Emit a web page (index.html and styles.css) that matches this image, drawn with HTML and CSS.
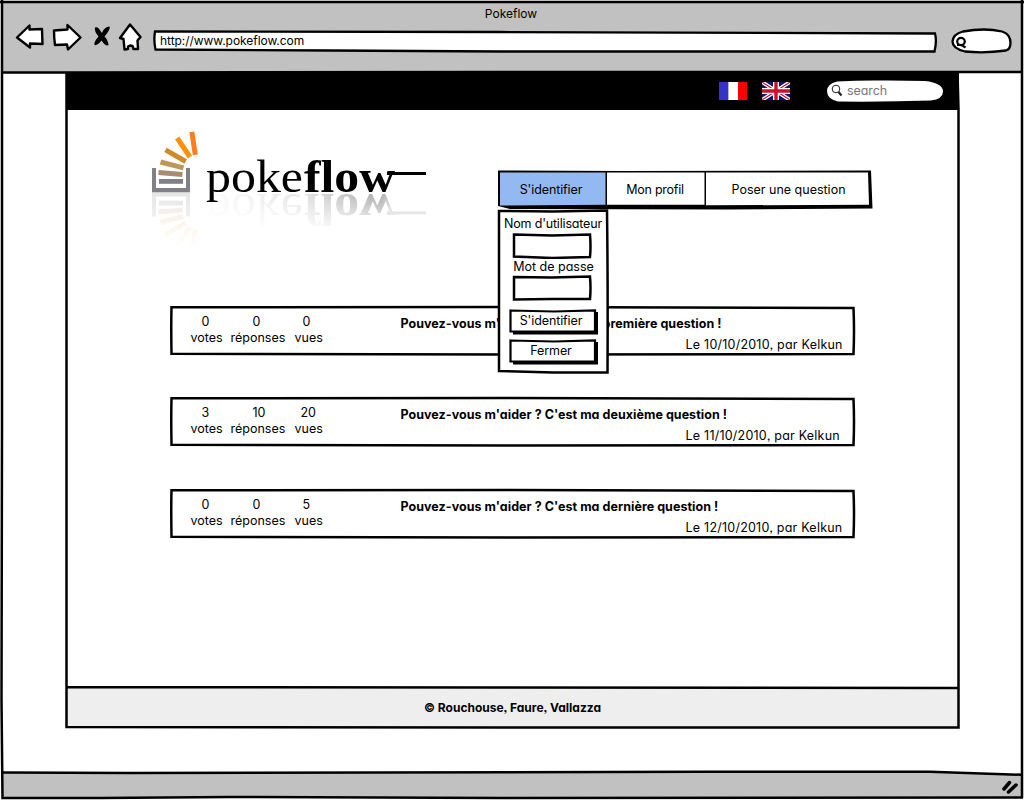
FILE: index.html
```html
<!DOCTYPE html>
<html lang="fr">
<head>
<meta charset="utf-8">
<title>Pokeflow</title>
<link rel="stylesheet" href="styles.css">
</head>
<body>
<div class="window">
  <header class="chrome">
    <svg class="sketch" width="1024" height="74" viewBox="0 0 1024 74">
      <path d="M2 3H1022V72H2Z" fill="#c1c1c1"/>
      <g fill="#fff" stroke="#000" stroke-width="2.4" stroke-linejoin="round">
        <path d="M17 37.500L29.500 25.500V29.500L42 29L42.500 44L30 43.500V47.500Z"/>
        <path d="M54 30.500L67.500 29.500V25L80.500 37.500L68 49.500L67 44.500L55 45Q54 38 54 30.500Z"/>
        <path d="M130 24.500L140.500 37L137.500 40.500L138 49H133.500L132.500 46L130 45.500L128 46.500V49L124.500 49.500L123.500 39L120 38Z"/>
      </g>
      <path d="M95 27.500Q98 26 100.500 31L102 33Q104 27 109.500 26.500Q111 29 104.500 36.500Q108 40 108.500 45Q106 47 101.500 40.500Q97 46 94.500 45Q93.500 42 98.500 36.500Q94 31 95 27.500Z"/>
      <path d="M155 31.500L500 32L935 33.500Q937 41 934.500 51.500L500 51.500L330 50.500L155.500 49.500Q153.500 40 155 31.500Z" fill="#fff" stroke="#000" stroke-width="2.300"/>
      <path d="M963 31.500Q985 27.500 1002 31.500Q1010.500 34 1010.500 43Q1010.500 49 1006 50.500Q985 53.500 965 51.500Q952.500 48.500 952.500 41.500Q953 34 963 31.500Z" fill="#fff" stroke="#000" stroke-width="2.300"/>
      <g fill="none" stroke="#000" stroke-width="2.200"><ellipse cx="961" cy="41.500" rx="3.800" ry="3.600"/><path d="M957 45H961.500L965.500 47.500"/></g>
    </svg>
    <div class="window-title">Pokeflow</div>
    <div class="url">http://www.pokeflow.com</div>
  </header>

  <div class="page">
    <div class="topbar">
      <svg class="flag" viewBox="0 0 28 18"><path fill="#33c" d="M0 0h9.300v18H0z"/><path fill="#fff" d="M9.300 0H19v18H9.300z"/><path fill="#f00" d="M19 0h9v18h-9z"/></svg>
      <svg class="flag" viewBox="0 0 28 18"><path fill="#00186e" d="M0 0h28v18H0z"/><path d="M0 0L28 18M28 0L0 18" stroke="#fff" stroke-width="3.800"/><path d="M0 0L28 18M28 0L0 18" stroke="#c8102e" stroke-width="1.100"/><path d="M14 0V18M0 9H28" stroke="#fff" stroke-width="6"/><path d="M14 0V18M0 9H28" stroke="#cc0f2b" stroke-width="3.400"/></svg>
      <div class="search">
        <svg class="sketch" width="116" height="22" viewBox="0 0 116 22"><path d="M10 1.500Q35 0 60 .5L98 1Q116 3 116 11.500Q116 19 104 20.500Q60 22 11 21.500Q0 19 0 11Q0 4 10 1.500Z" fill="#fff"/><g fill="none" stroke="#222"><circle cx="9" cy="9" r="3.800"/><path d="M11.500 12L14.500 15.500" stroke-width="2.200"/></g></svg>
        <span>search</span>
      </div>
    </div>

    <main class="content">
      <div class="masthead">
        <svg class="logo" width="300" height="130" viewBox="140 120 300 130">
          <defs>
            <linearGradient id="fadeText" x1="206" x2="390" y1="0" y2="0" gradientUnits="userSpaceOnUse"><stop offset="0" stop-color="#fff" stop-opacity=".01"/><stop offset=".5" stop-color="#fff" stop-opacity=".1"/><stop offset=".95" stop-color="#fff" stop-opacity=".34"/><stop offset="1" stop-color="#fff" stop-opacity=".2"/></linearGradient>
            <linearGradient id="fadeWhite" x1="0" x2="0" y1="193" y2="232" gradientUnits="userSpaceOnUse"><stop offset="0" stop-color="#fff" stop-opacity="0"/><stop offset="1" stop-color="#fff"/></linearGradient>
            <linearGradient id="fadeIcon" x1="0" x2="0" y1="193" y2="247" gradientUnits="userSpaceOnUse"><stop offset="0" stop-color="#fff" stop-opacity="0"/><stop offset="1" stop-color="#fff"/></linearGradient>
            <mask id="maskText" maskUnits="userSpaceOnUse" x="200" y="193" width="235" height="60"><path fill="url(#fadeText)" d="M200 193h235v60H200z"/></mask>
            <g id="stack">
              <path d="M152 168h4v20h30v-20h4v24.300h-38z" fill="#818086"/>
              <path d="M159 179h24v4.800h-24z" fill="#818086"/>
              <g fill="none" stroke-width="5"><path d="M158.500 172.500L182.500 174.500" stroke="#a98c70"/><path d="M160.500 162L183.500 167.800" stroke="#c0975a"/><path d="M165.500 149.800L185.800 161.500" stroke="#d08b28"/><path d="M177.200 138L190 157" stroke="#ff8e0a"/><path d="M191.800 131.800L195.300 154.800" stroke="#ff7d1d"/></g>
            </g>
            <g id="wordmark">
              <text x="206" y="192.300" class="logo-thin" textLength="97" lengthAdjust="spacingAndGlyphs">poke</text>
              <text x="304" y="192.300" class="logo-bold" textLength="91" lengthAdjust="spacingAndGlyphs">flow</text>
              <path d="M387 172h39v3h-39z"/>
            </g>
          </defs>
          <g opacity=".2"><use href="#stack" transform="matrix(1 0 0 -1 0 384.500)"/></g>
          <path d="M145 193h57v57h-57z" fill="url(#fadeIcon)"/>
          <g mask="url(#maskText)"><use href="#wordmark" transform="matrix(1 0 0 -1 0 386.500)"/></g>
          <path d="M206 193h230v55h-230z" fill="url(#fadeWhite)"/>
          <use href="#stack"/><use href="#wordmark"/>
        </svg>
        <nav class="nav">
          <svg class="sketch" width="376" height="40" viewBox="0 0 376 40">
            <path d="M0 .500L125 1L373 .500L374.500 38.500L230 39.500L12 39L0 36Z"/>
            <path d="M2 2.500H107.500V34.800L2 35.500Z" fill="#93b9f2"/>
            <path d="M109 2.500H206.500V34.800H109ZM208 2.500H370L371 34.800L208 35.300Z" fill="#fff"/>
          </svg>
          <a class="tab t1">S'identifier</a><a class="tab t2">Mon profil</a><a class="tab t3">Poser une question</a>
          <form class="login">
            <svg class="sketch" width="111" height="166" viewBox="0 0 111 166"><path d="M1 2L55 2.500L109 1.500Q110 80 109.500 163.500L55 163.500L1 162Z" fill="#fff" stroke="#000" stroke-width="2.500"/></svg>
            <label class="user">Nom d'utilisateur</label>
            <div class="field"><svg width="80" height="26" viewBox="0 0 80 26"><path d="M2 1.500L40 2.500L78 1.500Q79 13 78 24L40 25L2 23.500Z" fill="#fff" stroke="#000" stroke-width="2.500"/></svg></div>
            <label>Mot de passe</label>
            <div class="field second"><svg width="80" height="26" viewBox="0 0 80 26"><path d="M2 2L40 2.500L78 1.500Q79 13 78 24L40 24L2 24.500Z" fill="#fff" stroke="#000" stroke-width="2.500"/></svg></div>
            <div class="button"><svg class="sketch" width="90" height="27" viewBox="0 0 90 27"><path d="M4 22L86 23V3H89V25.500L4 25.500Z"/><path d="M1.500 1.500L45 2.500L86 1.500V22.500L1.500 22.500Z" fill="#fff" stroke="#000" stroke-width="2.200"/></svg><span>S'identifier</span></div>
            <div class="button"><svg class="sketch" width="90" height="27" viewBox="0 0 90 27"><path d="M4 22L86 23V3H89V25.500L4 25.500Z"/><path d="M1.500 1.500L45 2.500L86 1.500V22.500L1.500 22.500Z" fill="#fff" stroke="#000" stroke-width="2.200"/></svg><span>Fermer</span></div>
          </form>
        </nav>
      </div>

      <section class="questions">
        <article class="card">
          <svg class="sketch" width="686" height="49" viewBox="0 0 686 49"><path d="M1.500 1.200L340 1L683.500 2Q684.500 25 683.500 48L340 48.500L1.500 47.700Q1 20 1.500 1.200Z" fill="none" stroke="#000" stroke-width="2.500"/></svg>
          <div class="stat votes"><b>0</b><span>votes</span></div><div class="stat answers"><b>0</b><span>réponses</span></div><div class="stat views"><b>0</b><span>vues</span></div>
          <div class="body"><h2>Pouvez-vous m'aider ? C'est ma première question !</h2><p>Le 10/10/2010, par Kelkun</p></div>
        </article>
        <article class="card">
          <svg class="sketch" width="686" height="49" viewBox="0 0 686 49"><path d="M1.500 1.200L340 1L683.500 2Q684.500 25 683.500 48L340 48.500L1.500 47.700Q1 20 1.500 1.200Z" fill="none" stroke="#000" stroke-width="2.500"/></svg>
          <div class="stat votes"><b>3</b><span>votes</span></div><div class="stat answers"><b>10</b><span>réponses</span></div><div class="stat views two"><b>20</b><span>vues</span></div>
          <div class="body"><h2>Pouvez-vous m'aider ? C'est ma deuxième question !</h2><p>Le 11/10/2010, par Kelkun</p></div>
        </article>
        <article class="card last">
          <svg class="sketch" width="686" height="49" viewBox="0 0 686 49"><path d="M1.500 1.200L340 1L683.500 2Q684.500 25 683.500 48L340 48.500L1.500 47.700Q1 20 1.500 1.200Z" fill="none" stroke="#000" stroke-width="2.500"/></svg>
          <div class="stat votes"><b>0</b><span>votes</span></div><div class="stat answers"><b>0</b><span>réponses</span></div><div class="stat views"><b>5</b><span>vues</span></div>
          <div class="body"><h2>Pouvez-vous m'aider ? C'est ma dernière question !</h2><p>Le 12/10/2010, par Kelkun</p></div>
        </article>
      </section>
    </main>
    <footer class="credits">© Rouchouse, Faure, Vallazza</footer>
  </div>

  <svg class="outline" width="1024" height="800" viewBox="0 0 1024 800">
    <path d="M2 772.500L240 772.500L930 771.500L1022 775V798L500 797.500L230 796.500L3 798Z" fill="#c1c1c1"/>
    <g fill="none" stroke="#000" stroke-width="2.500">
      <path d="M0 2L1024 2M2 72.500L66 72.500L500 72L958 72H1022M2 0V430L1.500 700L2.500 798L100 798L230 797L500 798L1023 797.500M1022 0V798"/>
      <path d="M2 772.500L130 773L700 771.800L930 771.800L1022 774.800"/>
      <path d="M66.500 72V727L500 727.500H958.500V110L957.500 72M66 687L500 687.500L958 688"/>
    </g>
    <path d="M1004 789L1009.500 782.500M1008.500 792L1016 785" stroke="#000" stroke-width="3.500" stroke-linecap="round"/>
  </svg>
</div>
</body>
</html>
```
FILE: styles.css
```css
* { box-sizing: border-box; }
body { margin: 0; background: #fff; color: #000; font: 12.5px/16px Inter, "Open Sans", sans-serif; font-feature-settings: "cv11" 1, "ss03" 1; white-space: nowrap; }
.window { position: relative; z-index: 0; width: 1024px; height: 800px; overflow: hidden; }
.sketch { position: absolute; left: 0; top: 0; z-index: -1; display: block; overflow: visible; }
.chrome { position: relative; z-index: 0; height: 72px; padding-top: 6px; }
.window-title { text-align: center; padding-right: 2px; font-size: 12px; }
.url { margin: 11px 0 0 160px; font-size: 12px; letter-spacing: -.05px; }
.outline { position: absolute; left: 0; top: 0; z-index: 1; pointer-events: none; }
.page { width: 893px; height: 656px; margin-left: 66px; display: flex; flex-direction: column; }
.topbar { position: relative; height: 38px; background: #000; display: flex; align-items: center; justify-content: flex-end; gap: 15px; padding-right: 16px; }
.flag { width: 28px; height: 18px; display: block; }
.search { position: relative; z-index: 0; width: 116px; height: 22px; margin: 0 0 0 22px; padding: 3px 0 0 20px; color: #777583; letter-spacing: -.1px; }
.content { flex: 1; }
.masthead { display: flex; height: 196px; padding: 10px 0 0 74px; }
.logo { flex: none; }
.logo-thin, .logo-bold { font-family: "Liberation Serif", serif; font-size: 47px; }
.logo-bold { font-weight: bold; }
.nav { position: relative; z-index: 2; display: flex; width: 376px; height: 40px; margin: 50px 0 0 58px; }
.tab { height: 38px; line-height: 40px; text-align: center; }
.t1 { width: 106px; letter-spacing: -.1px; }
.t2 { width: 101px; letter-spacing: -.25px; padding-left: 1px; }
.t3 { width: 167px; }
.login { position: absolute; z-index: 3; left: 0; top: 39px; width: 111px; height: 166px; padding-top: 7px; display: flex; flex-direction: column; align-items: center; }
.login label { height: 16px; }
.login .user { letter-spacing: -.18px; padding-right: 1px; }
.field { width: 80px; height: 26px; margin: 1px 3px 0 0; }
.second { margin-top: 0; }
.field svg { display: block; }
.button { position: relative; z-index: 0; width: 90px; height: 27px; margin: 8px 0 0; padding: 4px 5px 0 0; text-align: center; letter-spacing: -.1px; }
.button + .button { margin-top: 3px; }
.questions { padding-left: 104px; display: flex; flex-direction: column; gap: 42px; }
.card { position: relative; z-index: 0; width: 686px; height: 49px; padding: 8px 11px 0 20.500px; display: flex; gap: 8px; }
.last { margin-top: 1px; }
.stat { display: flex; flex-direction: column; width: 32px; }
.stat b { font-weight: 400; }
.answers { width: 56px; }
.votes b { padding-left: 11px; }
.answers b { padding-left: 22px; }
.views b { padding-left: 8px; }
.two b { padding-left: 6px; }
.body { margin-left: 66px; flex: 1; padding-top: 2px; }
.body h2 { margin: 0; font-size: 12.5px; font-weight: 700; line-height: 16px; letter-spacing: .04px; }
.body p { margin: 5px 0 0 285px; letter-spacing: .23px; }
.credits { height: 41px; background: #eee; font-size: 12px; line-height: 42px; font-weight: 700; text-align: center; }
```
